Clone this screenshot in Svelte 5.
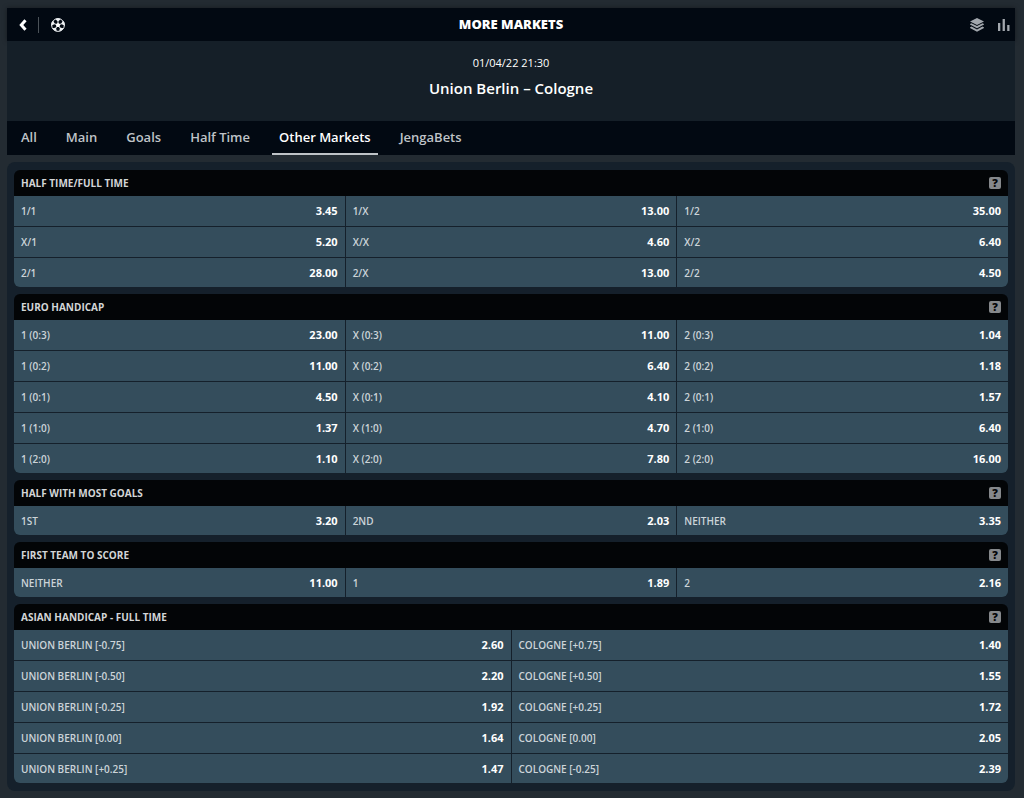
<script lang="ts">
    type Selection = [string, string];
    type Market = { name: string; columns: number; selections: Selection[] };

    const tabs = ['All', 'Main', 'Goals', 'Half Time', 'Other Markets', 'JengaBets'];
    let activeTab = 'Other Markets';

    const markets: Market[] = [
        {
            name: 'Half Time/Full Time',
            columns: 3,
            selections: [
                ['1/1', '3.45'], ['1/X', '13.00'], ['1/2', '35.00'],
                ['X/1', '5.20'], ['X/X', '4.60'], ['X/2', '6.40'],
                ['2/1', '28.00'], ['2/X', '13.00'], ['2/2', '4.50']
            ]
        },
        {
            name: 'Euro Handicap',
            columns: 3,
            selections: [
                ['1 (0:3)', '23.00'], ['X (0:3)', '11.00'], ['2 (0:3)', '1.04'],
                ['1 (0:2)', '11.00'], ['X (0:2)', '6.40'], ['2 (0:2)', '1.18'],
                ['1 (0:1)', '4.50'], ['X (0:1)', '4.10'], ['2 (0:1)', '1.57'],
                ['1 (1:0)', '1.37'], ['X (1:0)', '4.70'], ['2 (1:0)', '6.40'],
                ['1 (2:0)', '1.10'], ['X (2:0)', '7.80'], ['2 (2:0)', '16.00']
            ]
        },
        {
            name: 'Half With Most Goals',
            columns: 3,
            selections: [['1st', '3.20'], ['2nd', '2.03'], ['Neither', '3.35']]
        },
        {
            name: 'First Team To Score',
            columns: 3,
            selections: [['Neither', '11.00'], ['1', '1.89'], ['2', '2.16']]
        },
        {
            name: 'Asian Handicap - Full Time',
            columns: 2,
            selections: [
                ['Union Berlin [-0.75]', '2.60'], ['Cologne [+0.75]', '1.40'],
                ['Union Berlin [-0.50]', '2.20'], ['Cologne [+0.50]', '1.55'],
                ['Union Berlin [-0.25]', '1.92'], ['Cologne [+0.25]', '1.72'],
                ['Union Berlin [0.00]', '1.64'], ['Cologne [0.00]', '2.05'],
                ['Union Berlin [+0.25]', '1.47'], ['Cologne [-0.25]', '2.39']
            ]
        }
    ];

    function toRows(market: Market) {
        const rows: Selection[][] = [];
        for (let i = 0; i < market.selections.length; i += market.columns) {
            rows.push(market.selections.slice(i, i + market.columns));
        }
        return rows;
    }
</script>

<div class="page">
    <header>
        <div class="side">
            <button class="icon" aria-label="Back">
                <svg width="8" height="12" viewBox="0 0 8 12">
                    <path d="M6.500 1.300 2.300 6l4.200 4.700" fill="none" stroke="#fff" stroke-width="3" />
                </svg>
            </button>
            <span class="divider"></span>
            <button class="icon" aria-label="Football">
                <svg width="14" height="14" viewBox="0 0 14 14">
                    <circle cx="7" cy="7" r="6.400" fill="#020912" stroke="#eef1f3" stroke-width="1" />
                    <path d="m7 4.700 2.300 1.600-.9 2.700H5.600l-.9-2.700z" fill="#fff" />
                    {#each [0, 72, 144, 216, 288] as angle}
                        <path
                            d="M4.200.9Q7-.4 9.800.9L7.500 3.200V5h-1V3.200z"
                            fill="#eef1f3"
                            transform="rotate({angle} 7 7)"
                        />
                    {/each}
                </svg>
            </button>
        </div>
        <h1>More Markets</h1>
        <div class="side end">
            <button class="icon" aria-label="Layers">
                <svg width="14" height="14" viewBox="0 0 14 14" fill="#a2a7ad">
                    <path d="M7 0 14 3.500 7 7 0 3.500z" />
                    <path d="m0 6 1.500-.8L7 8l5.500-2.800L14 6v.6L7 10.200 0 6.600z" />
                    <path d="m0 9.400 1.500-.8L7 11.400l5.500-2.800 1.500.8v.6l-7 3.700L0 10z" />
                </svg>
            </button>
            <button class="icon" aria-label="Statistics">
                <svg width="12" height="12" viewBox="0 0 12 12" fill="#a2a7ad">
                    <path d="M0 4h2.300v8H0zM4.600 0h2.300v12H4.600zM9.200 6h2.300v6H9.200z" />
                </svg>
            </button>
        </div>
    </header>

    <section class="match">
        <time datetime="2022-04-01T21:30">01/04/22 21:30</time>
        <h2>Union Berlin – Cologne</h2>
    </section>

    <nav>
        {#each tabs as tab}
            <button class:active={tab === activeTab} on:click={() => (activeTab = tab)}>{tab}</button>
        {/each}
    </nav>

    <main>
        {#each markets as market}
            <section class="market">
                <div class="heading">
                    <h3>{market.name}</h3>
                    <button class="help" aria-label="Help for {market.name}">?</button>
                </div>
                {#each toRows(market) as row}
                    <div class="row">
                        {#each row as [label, odds]}
                            <button class="selection">
                                <span class="label">{label}</span>
                                <span class="odds">{odds}</span>
                            </button>
                        {/each}
                    </div>
                {/each}
            </section>
        {/each}
    </main>
</div>

<style>
    :global(body) {
        margin: 0;
        background: #232b32;
        font-family: 'Open Sans', sans-serif;
    }

    .page {
        box-sizing: border-box;
        padding: 8px 9px 8px 7px;
        color: #fff;
    }

    h1,
    h2,
    h3 {
        margin: 0;
    }

    button {
        border: 0;
        padding: 0;
        background: none;
        color: inherit;
        font-family: inherit;
        cursor: pointer;
    }

    header {
        display: grid;
        grid-template-columns: 1fr auto 1fr;
        align-items: center;
        height: 33px;
        background: #020912;
        box-shadow: 0 0 5px rgba(0, 0, 0, 0.4);
    }

    h1 {
        font-size: 13px;
        font-weight: 800;
        line-height: 17px;
        text-transform: uppercase;
    }

    .side {
        display: flex;
        align-items: center;
        padding: 0 5px 0 12px;
    }

    .end {
        justify-content: flex-end;
        gap: 14px;
    }

    .icon {
        display: flex;
    }

    .divider {
        width: 1px;
        height: 16px;
        margin: 0 12px 0 11px;
        background: #4b5258;
    }

    .match {
        display: flex;
        flex-direction: column;
        align-items: center;
        gap: 6px;
        padding: 14px 0 22px;
        background: #151f28;
    }

    time {
        font-size: 11px;
        line-height: 16px;
    }

    h2 {
        font-size: 15px;
        font-weight: 600;
        line-height: 22px;
    }

    nav {
        display: flex;
        gap: 15px;
        height: 34px;
        padding: 0 7px;
        background: #020912;
    }

    nav button {
        padding: 0 7px;
        border-bottom: 2px solid transparent;
        color: #bfc3c7;
        font-size: 13px;
        font-weight: 600;
    }

    nav .active {
        border-color: #bfc3c7;
        color: #fff;
    }

    main {
        display: grid;
        gap: 7px;
        margin-top: 7px;
        padding: 8px 7px;
        border-radius: 8px;
        background: #15202b;
    }

    .market {
        overflow: hidden;
        border-radius: 6px;
        background: #15202b;
    }

    .heading {
        display: flex;
        justify-content: space-between;
        align-items: center;
        height: 26px;
        padding: 0 7px;
        background: #030507;
    }

    h3 {
        color: #d3d5d7;
        font-size: 10px;
        font-weight: 700;
        text-transform: uppercase;
    }

    .help {
        width: 12px;
        height: 12px;
        border-radius: 2px;
        background: #85888b;
        color: #030507;
        font-size: 11px;
        font-weight: 800;
        line-height: 12px;
    }

    .row {
        display: grid;
        grid-auto-flow: column;
        grid-auto-columns: 1fr;
        gap: 1px;
        height: 30px;
        margin-bottom: 1px;
    }

    .row:last-child {
        height: 29px;
        margin-bottom: 0;
    }

    .selection {
        display: flex;
        justify-content: space-between;
        align-items: center;
        padding: 0 7px;
        background: #344d5c;
    }

    .label {
        color: #ccd4d9;
        font-size: 10px;
        font-weight: 600;
        text-transform: uppercase;
    }

    .odds {
        font-size: 11px;
        font-weight: 700;
        line-height: 14px;
    }
</style>
